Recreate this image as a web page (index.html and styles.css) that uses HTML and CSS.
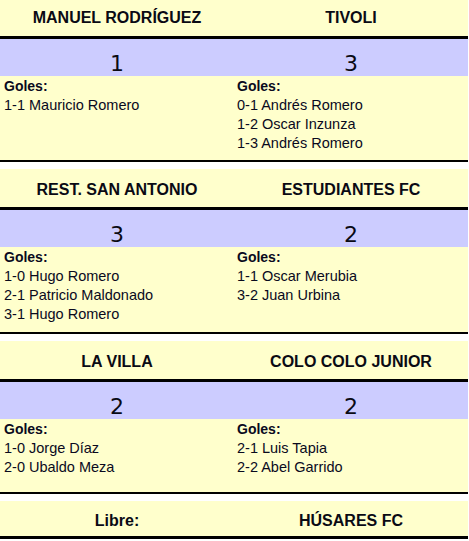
FILE: index.html
```html
<!DOCTYPE html>
<html lang="es">
<head>
<meta charset="utf-8">
<title>Resultados</title>
<link rel="stylesheet" href="styles.css">
</head>
<body>
<div class="sheet">
  <section class="match m1">
    <div class="row teams">
      <div class="team">MANUEL RODRÍGUEZ</div>
      <div class="team">TIVOLI</div>
    </div>
    <div class="row scores">
      <div class="score">1</div>
      <div class="score">3</div>
    </div>
    <div class="row goals g3">
      <div class="col">
        <div class="label">Goles:</div>
        <div class="goal">1-1 Mauricio Romero</div>
      </div>
      <div class="col">
        <div class="label">Goles:</div>
        <div class="goal">0-1 Andrés Romero</div>
        <div class="goal">1-2 Oscar Inzunza</div>
        <div class="goal">1-3 Andrés Romero</div>
      </div>
    </div>
  </section>

  <section class="match m2">
    <div class="row teams">
      <div class="team">REST. SAN ANTONIO</div>
      <div class="team">ESTUDIANTES FC</div>
    </div>
    <div class="row scores">
      <div class="score">3</div>
      <div class="score">2</div>
    </div>
    <div class="row goals g3">
      <div class="col">
        <div class="label">Goles:</div>
        <div class="goal">1-0 Hugo Romero</div>
        <div class="goal">2-1 Patricio Maldonado</div>
        <div class="goal">3-1 Hugo Romero</div>
      </div>
      <div class="col">
        <div class="label">Goles:</div>
        <div class="goal">1-1 Oscar Merubia</div>
        <div class="goal">3-2 Juan Urbina</div>
      </div>
    </div>
  </section>

  <section class="match">
    <div class="row teams">
      <div class="team">LA VILLA</div>
      <div class="team">COLO COLO JUNIOR</div>
    </div>
    <div class="row scores">
      <div class="score">2</div>
      <div class="score">2</div>
    </div>
    <div class="row goals g2">
      <div class="col">
        <div class="label">Goles:</div>
        <div class="goal">1-0 Jorge Díaz</div>
        <div class="goal">2-0 Ubaldo Meza</div>
      </div>
      <div class="col">
        <div class="label">Goles:</div>
        <div class="goal">2-1 Luis Tapia</div>
        <div class="goal">2-2 Abel Garrido</div>
      </div>
    </div>
  </section>

  <section class="match bye">
    <div class="row teams">
      <div class="team">Libre:</div>
      <div class="team">HÚSARES FC</div>
    </div>
  </section>
</div>
</body>
</html>
```

FILE: styles.css
```css
* { box-sizing: border-box; }
html, body { margin: 0; padding: 0; background: #ffffff; }
body {
  font-family: "Liberation Sans", Arial, sans-serif;
  color: #000;
}
.sheet {
  width: 468px;
  display: flex;
  flex-direction: column;
  gap: 7px;
}
.match {
  display: flex;
  flex-direction: column;
  border-bottom: 2px solid #000;
}
.match.bye { border-bottom: none; }
.row {
  display: grid;
  grid-template-columns: 234px 234px;
}
.teams {
  height: 41px;
  padding-top: 3px;
  background: #ffffcc;
  border-bottom: 3px solid #000;
  align-items: center;
  font-weight: bold;
  font-size: 16px;
  text-align: center;
  color: #0a0a14;
}
.m1 .teams { height: 39px; padding-top: 0; }
.bye .teams { height: 38px; padding-top: 4px; }
.scores {
  height: 37px;
  background: #ccccff;
  align-items: end;
}
.score {
  text-align: center;
  font-family: "DejaVu Sans", Verdana, sans-serif;
  font-size: 22px;
  line-height: 26px;
  margin-bottom: -1px;
  color: #0a0a14;
}
.goals {
  background: #ffffcc;
  font-size: 14.5px;
  line-height: 19px;
  padding-top: 1px;
  color: #0a0a1e;
}
.goals.g3 { height: 84px; }
.m2 .goals.g3 { height: 85px; }
.goals.g2 { height: 73px; }
.col { padding-left: 4px; }
.col + .col { padding-left: 3px; }
.label { font-weight: bold; font-size: 14px; }
```
